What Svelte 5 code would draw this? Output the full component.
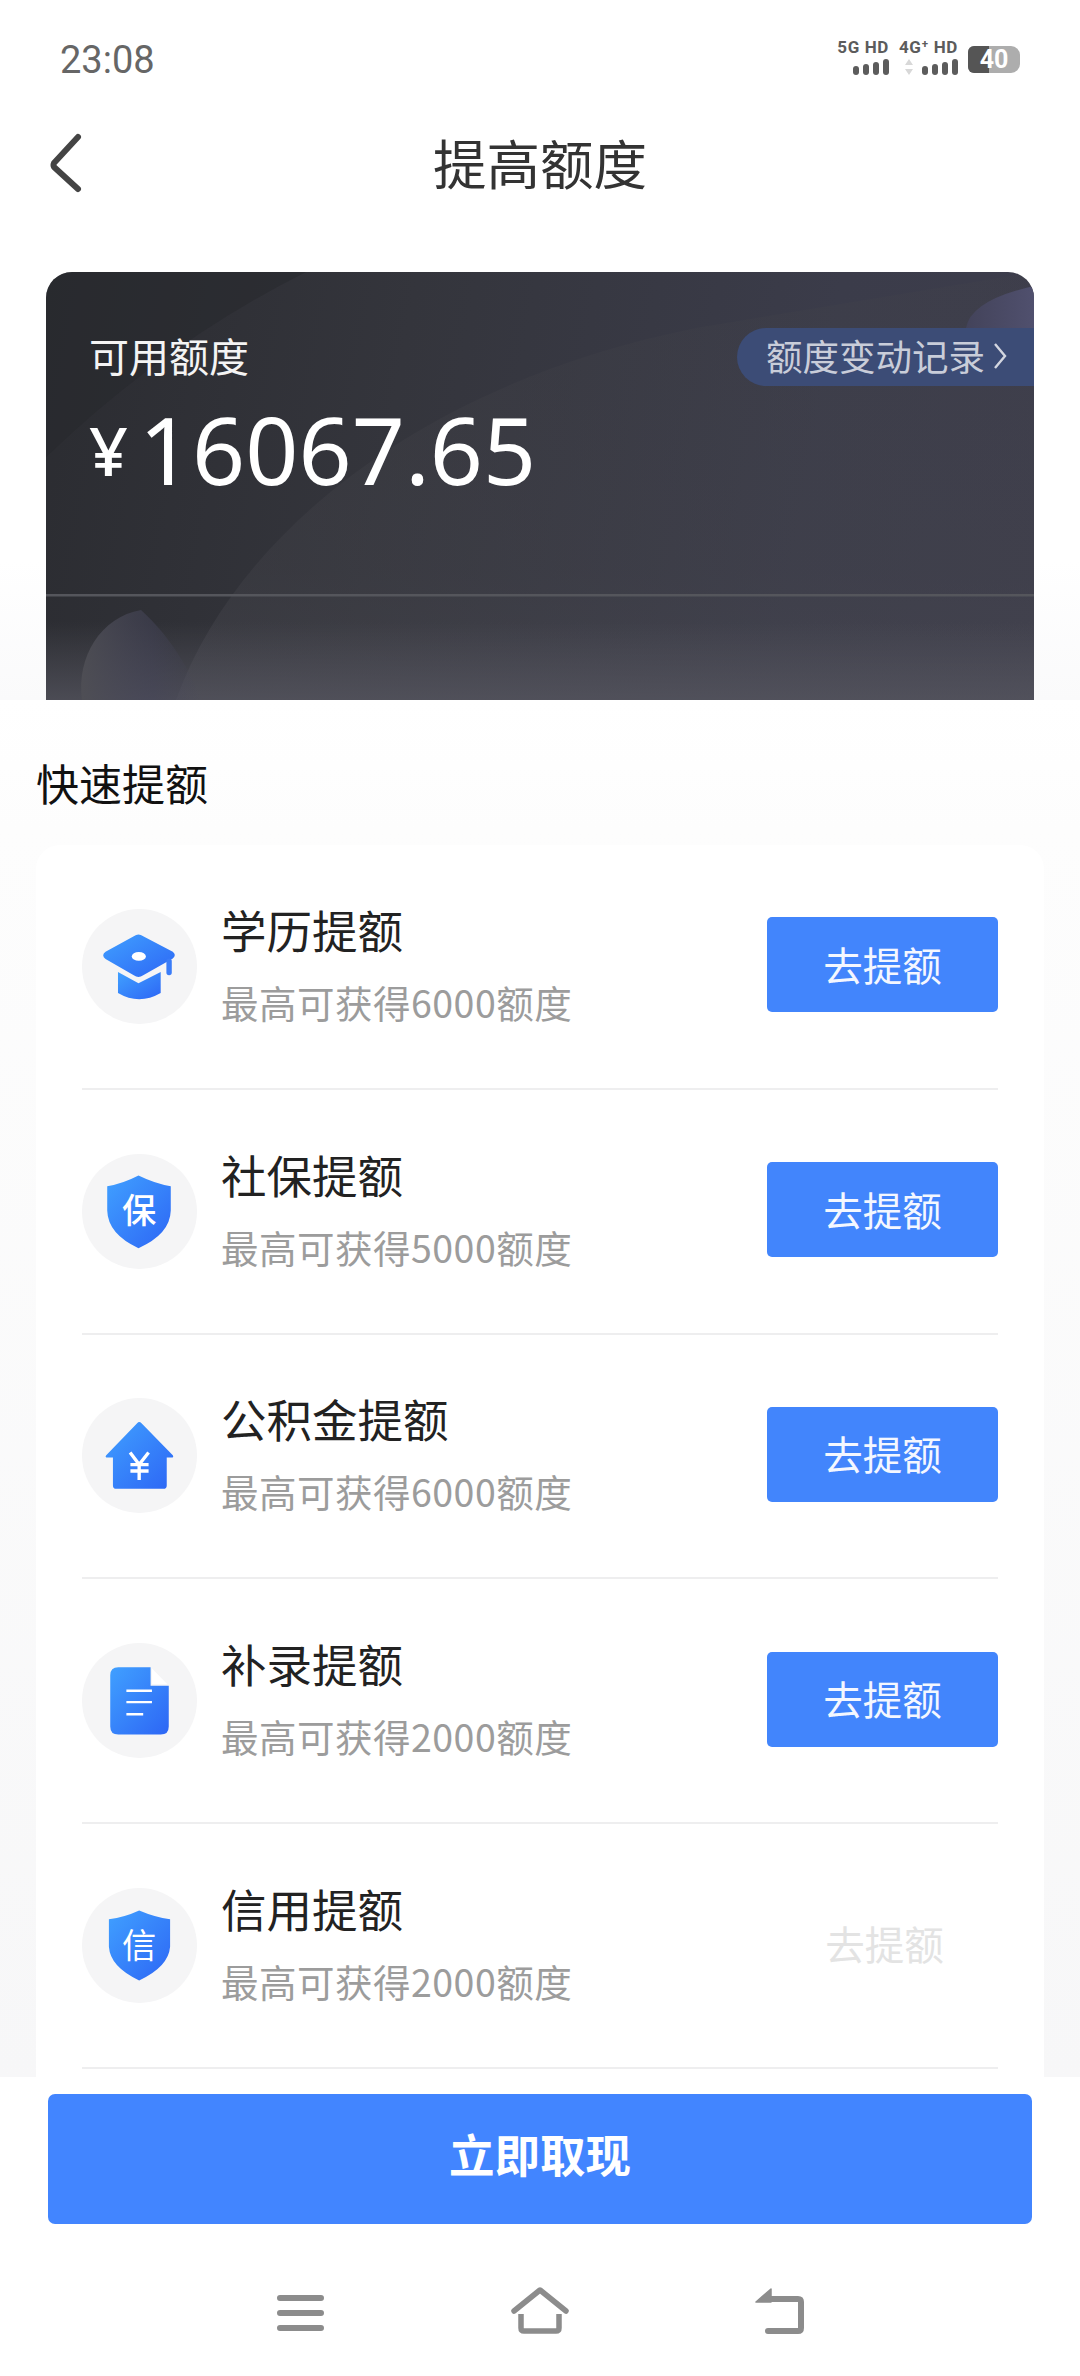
<script>
  const rows = [
    { icon: 'cap', title: '学历提额', sub: '最高可获得6000额度' },
    { icon: 'bao', title: '社保提额', sub: '最高可获得5000额度' },
    { icon: 'house', title: '公积金提额', sub: '最高可获得6000额度' },
    { icon: 'doc', title: '补录提额', sub: '最高可获得2000额度' },
    { icon: 'xin', title: '信用提额', sub: '最高可获得2000额度', off: true }
  ];
</script>

<div class="page">
  <svg class="defs" width="0" height="0" aria-hidden="true">
    <defs>
      <linearGradient id="blue" x1="0" y1="0" x2="1" y2="1">
        <stop offset="0" stop-color="#40a0ff" />
        <stop offset="1" stop-color="#2d66f5" />
      </linearGradient>
    </defs>
  </svg>

  <header class="top">
    <div class="status">
      <span class="time">23:08</span>
      <div class="sys">
        <div class="sig">
          <span class="net">5G HD</span>
          <div class="bars"><i></i><i></i><i></i><i></i></div>
        </div>
        <div class="sig">
          <span class="net">4G⁺ HD</span>
          <div class="bars">
            <svg class="updown" viewBox="0 0 10 16" width="10" height="16"><path d="M5 0l4 6H1zM5 16l4-6H1z" fill="#d8d8d8" /></svg>
            <i></i><i></i><i></i><i></i>
          </div>
        </div>
        <div class="battery"><span class="level"></span><span class="pct">40</span></div>
      </div>
    </div>

    <nav class="nav">
      <svg class="back" viewBox="0 0 45 64" width="45" height="64"><path d="M33 4 L9 30 Q8 32 9 34 L33 56" fill="none" stroke="#444" stroke-width="6" stroke-linecap="round" stroke-linejoin="round" /></svg>
      <h1>提高额度</h1>
    </nav>

    <section class="credit">
      <svg class="decor" viewBox="0 0 988 428" preserveAspectRatio="none" aria-hidden="true">
        <defs>
          <linearGradient id="swoosh" x1="0" y1="0" x2="0" y2="1">
            <stop offset="0" stop-color="#45454a" stop-opacity=".18" />
            <stop offset=".7" stop-color="#45454c" stop-opacity=".35" />
            <stop offset="1" stop-color="#4a4a52" stop-opacity=".5" />
          </linearGradient>
          <linearGradient id="fadeb" x1="0" y1="0" x2="0" y2="1">
            <stop offset="0" stop-color="#55555f" stop-opacity="0" />
            <stop offset="1" stop-color="#55555f" stop-opacity=".75" />
          </linearGradient>
          <linearGradient id="leftc" x1="0" y1="0" x2="1" y2="0">
            <stop offset="0" stop-color="#4f4f55" stop-opacity=".9" />
            <stop offset=".6" stop-color="#45455a" stop-opacity=".5" />
            <stop offset="1" stop-color="#45455a" stop-opacity="0" />
          </linearGradient>
          <linearGradient id="rightc" x1="0" y1="0" x2="1" y2="0">
            <stop offset="0" stop-color="#43435a" />
            <stop offset="1" stop-color="#50506e" />
          </linearGradient>
        </defs>
        <path d="M0 0 H260 Q120 70 0 185Z" fill="#26272b" opacity=".5" />
        <path d="M130 428 C190 260 380 110 650 56 L988 0 V428Z" fill="url(#swoosh)" />
        <rect x="0" y="350" width="988" height="78" fill="url(#fadeb)" />
        <path d="M920 56 Q925 28 988 14 V56Z" fill="url(#rightc)" />
        <path d="M36 428 C30 385 55 345 95 338 C125 365 145 400 155 428Z" fill="url(#leftc)" />
        <rect x="0" y="322" width="988" height="2.5" fill="#55565c" />
      </svg>

      <div class="credit-top">
        <div class="label">可用额度</div>
        <div class="pill">额度变动记录<svg viewBox="0 0 14 28" width="14" height="28"><path d="M2 2 L12 14 L2 26" fill="none" stroke="#d3d6e0" stroke-width="2.4" /></svg></div>
      </div>
      <div class="amount"><span class="yen">¥</span><span class="num">16067.65</span></div>
    </section>
  </header>

  <main class="sheet">
    <h2>快速提额</h2>
    <div class="list">
      {#each rows as r}
        <div class="row">
          <div class="ico">
            {#if r.icon === 'cap'}
              <svg viewBox="68 85 342 342">
                <path d="M175 272 L236 306 L302 272 V335 Q238 372 175 335Z" fill="url(#blue)" />
                <path d="M222 166 Q236 156 250 166 L338 212 Q350 222 338 232 L250 282 Q236 292 222 282 L138 234 Q124 222 138 212Z" fill="url(#blue)" />
                <ellipse cx="237" cy="226" rx="21" ry="13" fill="#fff" />
                <path d="M327 240 V274" stroke="#3a7cf8" stroke-width="16" stroke-linecap="round" />
              </svg>
            {:else if r.icon === 'bao'}
              <svg viewBox="68 102 342 342">
                <path d="M236 166 Q285 190 332 198 V270 Q330 340 236 382 Q145 340 143 270 V198 Q190 190 236 166Z" fill="url(#blue)" />
                <text x="238" y="307" class="glyph">保</text>
              </svg>
            {:else if r.icon === 'house'}
              <svg viewBox="68 28 342 342">
                <path d="M232 103 Q238 96 245 103 L338 198 Q342 205 334 205 H320 V288 Q320 298 310 298 H170 Q160 298 160 288 V205 H144 Q135 205 140 198Z" fill="url(#blue)" />
                <path d="M211 190 L238 226 L266 190 M212 226 H266 M212 245 H266 M238 226 V272" fill="none" stroke="#fff" stroke-width="10" />
              </svg>
            {:else if r.icon === 'doc'}
              <svg viewBox="68 70 342 342">
                <path d="M176 142 H272 V197 H326 V318 Q326 342 302 342 H176 Q152 342 152 318 V166 Q152 142 176 142Z" fill="url(#blue)" />
                <path d="M276 146 L322 193 H276Z" fill="#fff" />
                <path d="M200 212 H276 M200 246 H276 M200 282 H250" stroke="#fff" stroke-width="7" />
              </svg>
            {:else}
              <svg viewBox="68 85 342 342">
                <path d="M238 152 Q285 172 330 178 V260 Q325 320 238 360 Q152 320 148 260 V178 Q195 172 238 152Z" fill="url(#blue)" />
                <text x="238" y="292" class="glyph thin">信</text>
              </svg>
            {/if}
          </div>
          <div class="txt">
            <div class="t">{r.title}</div>
            <div class="s">{r.sub}</div>
          </div>
          <button class:off={r.off}>去提额</button>
        </div>
      {/each}
    </div>
  </main>

  <footer class="foot">
    <button class="cta">立即取现</button>
    <div class="sysnav">
      <svg viewBox="0 0 60 60" width="60" height="60"><path d="M10 16 H51 M10 31 H51 M10 46 H51" stroke="#8c8c8c" stroke-width="6" stroke-linecap="round" /></svg>
      <svg viewBox="0 0 60 60" width="60" height="60"><path d="M4 29 L30 8 L56 29" fill="none" stroke="#8c8c8c" stroke-width="5.5" stroke-linecap="round" stroke-linejoin="round" /><path d="M11 32 V46 Q11 49 14 49 H46 Q49 49 49 46 V32" fill="none" stroke="#8c8c8c" stroke-width="5.5" /></svg>
      <svg viewBox="0 0 60 60" width="60" height="60"><path d="M21 7 L6 20 H21Z" fill="#8c8c8c" stroke="#8c8c8c" stroke-width="1.5" stroke-linejoin="round" /><path d="M14 17 H48 Q51 17 51 20 V46 Q51 49 48 49 H18" fill="none" stroke="#8c8c8c" stroke-width="6" stroke-linecap="round" /></svg>
    </div>
  </footer>
</div>

<style>
  :global(body) { margin: 0; background: #fff; }
  .page {
    width: 1080px;
    height: 2376px;
    display: flex;
    flex-direction: column;
    overflow: hidden;
    font-family: "Noto Sans CJK SC", "Noto Sans", sans-serif;
  }
  .defs { position: absolute; }
  .top {
    height: 700px;
    flex: none;
    background: linear-gradient(#fff 560px, #fafafb 700px);
    display: flex;
    flex-direction: column;
  }
  .status {
    height: 120px;
    padding: 0 60px;
    display: flex;
    justify-content: space-between;
    align-items: center;
    box-sizing: border-box;
  }
  .time { font: 400 38px Roboto, sans-serif; color: #666; }
  .sys { display: flex; align-items: center; gap: 10px; margin-top: -6px; }
  .sig { display: flex; flex-direction: column; align-items: flex-end; gap: 3px; }
  .net { font: 700 17px/16px Roboto, sans-serif; letter-spacing: .6px; color: #5c5c5c; white-space: nowrap; }
  .bars { display: flex; align-items: flex-end; gap: 4px; height: 17px; }
  .bars i { width: 6px; background: #5c5c5c; border-radius: 3px; }
  .bars i:nth-of-type(1) { height: 9px; }
  .bars i:nth-of-type(2) { height: 11px; }
  .bars i:nth-of-type(3) { height: 13px; }
  .bars i:nth-of-type(4) { height: 16px; }
  .updown { margin-right: 4px; }
  .battery {
    width: 52px;
    height: 27px;
    margin-top: 4px;
    background: #adadad;
    border-radius: 6px 9px 9px 6px;
    position: relative;
    display: flex;
    align-items: center;
    justify-content: center;
  }
  .level { position: absolute; left: 0; top: 0; bottom: 0; width: 21px; background: #555; border-radius: 6px 0 0 6px; }
  .pct { position: relative; font: 700 25px/27px Roboto, sans-serif; color: #fff; }
  .nav {
    height: 90px;
    position: relative;
    display: flex;
    align-items: center;
    justify-content: center;
  }
  .back { position: absolute; left: 45px; top: 13px; }
  h1 { margin: -7px 0 0; font-size: 53.5px; font-weight: 400; color: #333; line-height: 90px; }
  .credit {
    position: relative;
    margin: 62px 46px 0;
    height: 428px;
    border-radius: 26px 26px 0 0;
    overflow: hidden;
    background: linear-gradient(100deg, #2b2c31 0%, #34353c 35%, #3b3c4a 75%, #3d3d4c 100%);
    color: #fff;
  }
  .decor { position: absolute; inset: 0; width: 100%; height: 100%; }
  .credit-top {
    position: relative;
    display: flex;
    justify-content: space-between;
    align-items: center;
    padding-top: 56px;
    height: 58px;
  }
  .label { margin: -5px 0 0 43px; font-size: 40px; line-height: 58px; color: #f4f4f4; }
  .pill {
    height: 58px;
    width: 297px;
    box-sizing: border-box;
    padding: 0 0 3px 29px;
    border-radius: 29px 0 0 29px;
    background: #3c4c76;
    color: #c9cdd9;
    font-size: 36.5px;
    line-height: 56px;
    display: flex;
    align-items: center;
    gap: 8px;
    white-space: nowrap;
  }
  .amount {
    position: relative;
    margin: 8px 0 0 43px;
    display: flex;
    align-items: flex-end;
    gap: 11px;
  }
  .yen { font: 500 68px/68px "Noto Sans", sans-serif; margin-bottom: 20px; }
  .num { font: 400 93px/110px "Noto Sans", sans-serif; }
  .sheet {
    flex: 1;
    min-height: 0;
    overflow: hidden;
    display: flex;
    flex-direction: column;
    padding: 54px 36px 0;
    background: linear-gradient(#fff, #fdfdfd 130px, #f7f7f8);
  }
  h2 { margin: -1px 0 34px; font-size: 43px; font-weight: 400; line-height: 58px; color: #111; }
  .list { flex: 1; background: #fff; border-radius: 24px 24px 0 0; padding: 0 46px; }
  .row {
    height: 244.8px;
    box-sizing: border-box;
    border-bottom: 2px solid #eeeeef;
    display: flex;
    align-items: center;
  }
  .ico { width: 115px; height: 115px; border-radius: 50%; background: #f5f5f6; flex: none; }
  .ico svg { display: block; width: 100%; height: 100%; }
  .glyph { font-size: 102px; font-weight: 500; fill: #fff; text-anchor: middle; font-family: "Noto Sans CJK SC", sans-serif; }
  .glyph.thin { font-size: 102px; font-weight: 400; }
  .txt { flex: 1; margin-left: 24px; margin-top: -7px; }
  .t { font-size: 45.5px; line-height: 60px; color: #222; white-space: nowrap; }
  .s { font-size: 37.5px; letter-spacing: .5px; line-height: 50px; margin-top: 18px; color: #9c9c9c; white-space: nowrap; }
  button { border: 0; font-family: inherit; }
  .row button {
    width: 231px;
    height: 95px;
    padding: 0 0 3px;
    background: #4285fc;
    border-radius: 5px;
    color: #f4f7ff;
    font-size: 39.5px;
    margin-top: -3px;
  }
  .row button.off { background: transparent; color: #e3e3e3; padding-left: 4px; }
  .foot {
    flex: none;
    height: 299px;
    background: #fff;
    box-sizing: border-box;
    padding: 17px 48px 0;
  }
  .cta {
    display: block;
    width: 984px;
    height: 130px;
    padding: 0 0 12px;
    border-radius: 7px;
    background: #4285ff;
    color: #fff;
    font-size: 45.5px;
    font-weight: 700;
  }
  .sysnav {
    margin-top: 58px;
    display: flex;
    justify-content: center;
    gap: 180px;
  }
</style>
